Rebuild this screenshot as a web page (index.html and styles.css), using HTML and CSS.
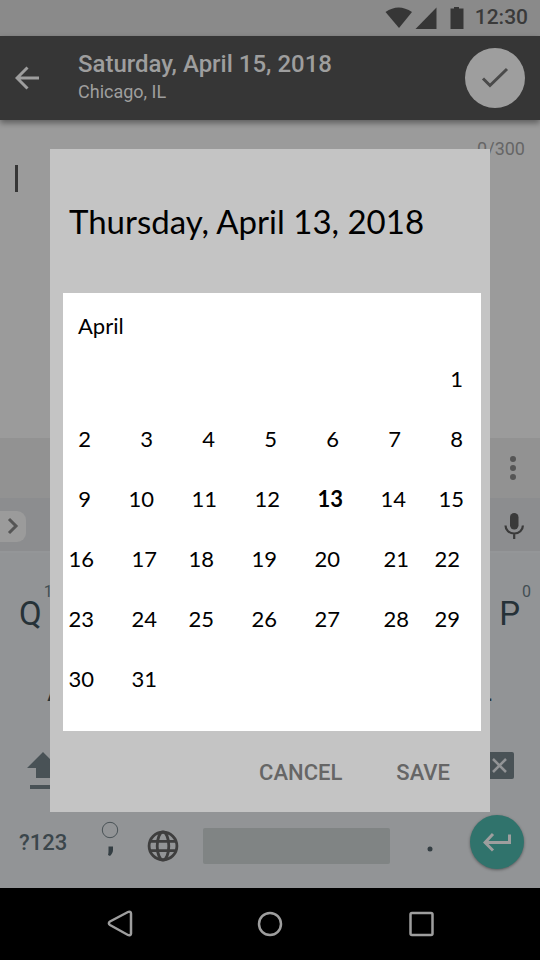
FILE: index.html
```html
<!DOCTYPE html>
<html lang="en">
<head>
<meta charset="utf-8">
<meta name="viewport" content="width=device-width, initial-scale=1">
<title>Date picker</title>
<link rel="stylesheet" href="styles.css">
</head>
<body>
<div class="screen">
  <div class="status">
    <svg class="status-icons" width="80" height="24" viewBox="0 0 80 24" aria-hidden="true">
      <path d="M.5 6Q13.500-3 27 6L14 22z"/>
      <path d="M51.500 1.500V23H30.500z"/>
      <path d="M69 1h5V2.500h4.500V23h-13V2.500H69z"/>
    </svg>
    <span>12:30</span>
  </div>
  <header class="appbar">
    <button class="plain back" aria-label="Back">
      <svg width="24" height="24" viewBox="0 0 24 24"><path d="M24 12H2M12.500 1.500L2 12l10.500 10.500"/></svg>
    </button>
    <div class="titles">
      <h1>Saturday, April 15, 2018</h1>
      <p>Chicago, IL</p>
    </div>
    <button class="plain done" aria-label="Done">
      <svg width="28" height="22" viewBox="0 0 28 22"><path d="M2 11.500l7 7L26 2"/></svg>
    </button>
  </header>
  <main class="editor">
    <div class="count">0/300</div>
    <div class="caret"></div>
  </main>
  <div class="toolbar">
    <button class="plain" aria-label="More options">
      <svg width="8" height="26" viewBox="0 0 8 26" fill="#555"><circle cx="4" cy="4" r="3"/><circle cx="4" cy="13" r="3"/><circle cx="4" cy="22" r="3"/></svg>
    </button>
  </div>
  <div class="suggestions">
    <button class="plain expand" aria-label="Expand">
      <svg width="12" height="18" viewBox="0 0 12 18"><path d="M2 2l7 7-7 7"/></svg>
    </button>
    <button class="plain mic" aria-label="Voice input">
      <svg width="20" height="26" viewBox="0 0 20 26"><rect x="6" y="0" width="8.500" height="16.500" rx="4.200" fill="#3a3a3a"/><path d="M1.500 12.500c0 4.500 3.800 8 8.700 8s8.700-3.500 8.700-8M10.200 20v6" fill="none" stroke="#3a3a3a" stroke-width="2.200"/></svg>
    </button>
  </div>
  <div class="keyboard">
    <div class="keys">
      <button class="plain key">Q<sup>1</sup></button>
      <button class="plain key">P<sup>0</sup></button>
    </div>
    <div class="keys home">
      <button class="plain key">A</button>
      <button class="plain key">L</button>
    </div>
    <div class="keys edit">
      <button class="plain shift" aria-label="Shift">
        <svg width="32" height="40" viewBox="0 0 32 40"><path d="M16 1l16 16h-7v10H9V17H0zM3 34h26v4H3z" fill="#495256"/></svg>
      </button>
      <button class="plain" aria-label="Backspace">
        <svg width="38" height="28" viewBox="0 0 38 28"><path d="M12 0h24a2 2 0 0 1 2 2v23a2 2 0 0 1-2 2H12L1 13.500z" fill="#495256"/><path d="M17 7l13 13M30 7l-13 13" stroke="#929496" stroke-width="2.500"/></svg>
      </button>
    </div>
    <div class="keys bottom">
      <button class="plain sym">?123</button>
      <button class="plain comma" aria-label="Comma">
        <svg width="18" height="38" viewBox="0 0 18 38"><circle cx="9" cy="9" r="7.700" fill="none" stroke="#495256"/><path d="M7.500 25.500h4.500v3.500c0 2-1 4-3 6l-2-1C7.500 32.500 7.500 31 7.500 29z" fill="#343e43"/></svg>
      </button>
      <button class="plain globe" aria-label="Language">
        <svg width="32" height="32" viewBox="0 0 32 32" fill="none" stroke="#3e3e3e" stroke-width="2.800"><circle cx="16" cy="16" r="13.900"/><ellipse cx="16" cy="16" rx="5.800" ry="14"/><path d="M3 11.300h26M3 20.700h26"/></svg>
      </button>
      <button class="plain space" aria-label="Space"></button>
      <button class="plain period" aria-label="Period">
        <svg width="6" height="6" viewBox="0 0 6 6"><circle cx="3" cy="3" r="2.500" fill="#343e43"/></svg>
      </button>
      <button class="plain enter" aria-label="Enter">
        <svg width="28" height="20" viewBox="0 0 28 20"><path d="M26.500 2.500v8H2M10 2L2 10.500 10 18.500"/></svg>
      </button>
    </div>
  </div>
  <nav class="nav">
    <button class="plain" aria-label="Back">
      <svg width="28" height="28" viewBox="0 0 28 28"><path d="M23 2c1.500-.800 3 0 3 1.500v20c0 1.500-1.500 2.300-3 1.500L5 15c-1.500-.900-1.500-2.600 0-3.500z"/></svg>
    </button>
    <button class="plain" aria-label="Home">
      <svg width="28" height="28" viewBox="0 0 28 28"><circle cx="14" cy="14" r="11"/></svg>
    </button>
    <button class="plain" aria-label="Recent apps">
      <svg width="28" height="28" viewBox="0 0 28 28"><rect x="3.500" y="3" width="22" height="22" rx="1.500"/></svg>
    </button>
  </nav>
</div>

<div class="overlay">
  <section class="dialog" role="dialog" aria-labelledby="picked">
    <h2 id="picked">Thursday, April 13, 2018</h2>
    <table class="calendar">
      <caption>April</caption>
      <tbody>
        <tr><td></td><td></td><td></td><td></td><td></td><td></td><td>1</td></tr>
        <tr><td>2</td><td>3</td><td>4</td><td>5</td><td>6</td><td>7</td><td>8</td></tr>
        <tr class="mixed"><td>9</td><td>10</td><td>11</td><td>12</td><td class="selected">13</td><td>14</td><td>15</td></tr>
        <tr class="double"><td>16</td><td>17</td><td>18</td><td>19</td><td>20</td><td>21</td><td>22</td></tr>
        <tr class="double"><td>23</td><td>24</td><td>25</td><td>26</td><td>27</td><td>28</td><td>29</td></tr>
        <tr class="double"><td>30</td><td>31</td><td></td><td></td><td></td><td></td><td></td></tr>
      </tbody>
    </table>
    <div class="actions">
      <button class="plain">CANCEL</button>
      <button class="plain">SAVE</button>
    </div>
  </section>
</div>
</body>
</html>
```
FILE: styles.css
```css
* { box-sizing: border-box; }

body {
  margin: 0;
  font-family: Roboto, sans-serif;
  background: #9b9b9b;
}

h1, h2, p { margin: 0; }
svg { display: block; }

.plain {
  margin: 0;
  padding: 0;
  border: 0;
  background: none;
  color: inherit;
  font: inherit;
  cursor: pointer;
}

.screen {
  display: flex;
  flex-direction: column;
  min-height: 100vh;
}

.status {
  display: flex;
  align-items: center;
  justify-content: flex-end;
  gap: 10px;
  height: 36px;
  padding-right: 12px;
  background: #8a8a8a;
  color: #3a3a3a;
  font-size: 21px;
  font-weight: 500;
  line-height: 34px;
}
.status-icons { fill: #363636; }
.status span { padding-bottom: 2px; }

.appbar {
  display: flex;
  align-items: center;
  height: 84px;
  padding: 0 15px;
  background: #363636;
  color: #9e9e9e;
  box-shadow: 0 3px 6px rgba(0, 0, 0, 0.4);
}
.back svg { fill: none; stroke: #9e9e9e; stroke-width: 3; }
.titles { flex: 1; padding-left: 39px; }
.titles h1 { font-size: 24px; font-weight: 500; line-height: 28px; }
.titles p { font-size: 18px; line-height: 28px; }
.done {
  display: grid;
  place-items: center;
  width: 60px;
  height: 60px;
  border-radius: 50%;
  background: #9e9e9e;
}
.done svg { fill: none; stroke: #4a4a4a; stroke-width: 3; }

.editor { flex: 1; padding: 16px 15px; }
.count {
  color: #666;
  font-size: 18px;
  line-height: 26px;
  text-align: right;
}
.caret { width: 3px; height: 27px; margin-top: 3px; background: #363636; }

.toolbar {
  display: flex;
  align-items: center;
  justify-content: flex-end;
  height: 60px;
  padding-right: 23px;
  background: #929292;
}

.suggestions {
  display: flex;
  align-items: center;
  justify-content: space-between;
  height: 55px;
  padding: 3px 16px 0 0;
  border-bottom: 2px solid #949698;
  background: #8c8d8f;
}
.expand {
  width: 26px;
  height: 31px;
  padding-left: 7px;
  border-radius: 0 9px 9px 0;
  background: #9b9b9b;
}
.expand svg { fill: none; stroke: #555; stroke-width: 3; }

.keyboard { padding: 23px 0 8px; background: #929496; }
.keys {
  display: flex;
  align-items: center;
  justify-content: space-between;
  height: 76px;
  padding: 0 20px 0 19px;
}
.key { position: relative; color: #263238; font-size: 33px; line-height: 40px; }
.key sup {
  position: absolute;
  left: 100%;
  top: -12px;
  color: #434e53;
  font-size: 16px;
  line-height: 20px;
  padding-left: 2px;
}
.home { padding: 0 48px 0 47px; }
.edit { padding: 0 26px 0 27px; }
.shift { padding-top: 9px; }
.bottom { padding: 0 16px 0 19px; }
.sym { color: #3b464b; font-size: 22px; font-weight: 500; }
.comma { margin-left: 34px; padding-bottom: 4px; }
.globe { margin: 8px 24px 0 28px; }
.space { flex: 1; height: 36px; margin-top: 8px; border-radius: 2px; background: #808484; }
.period { margin: 13px 37px 0 37px; }
.enter {
  display: grid;
  place-items: center;
  width: 54px;
  height: 54px;
  border-radius: 50%;
  background: #30736c;
  box-shadow: 0 1px 3px rgba(0, 0, 0, 0.4);
}
.enter svg { fill: none; stroke: #9e9e9e; stroke-width: 3; }

.nav {
  display: flex;
  align-items: center;
  justify-content: space-between;
  height: 72px;
  padding: 0 105px;
  background: #000;
}
.nav svg { fill: none; stroke: #9e9e9e; stroke-width: 2.5; }

.overlay {
  position: absolute;
  inset: 0;
  display: grid;
  place-items: center;
}
.dialog {
  width: calc(100% - 100px);
  padding: 0 9px 0 13px;
  background: #c4c4c4;
  color: #000;
}
.dialog h2 {
  padding: 0 6px;
  font-family: Lato, sans-serif;
  font-size: 33px;
  font-weight: 400;
  line-height: 144px;
}

.calendar {
  display: block;
  padding-bottom: 22px;
  background: #fff;
  font-family: Lato, sans-serif;
  font-size: 22px;
}
.calendar caption {
  display: block;
  padding: 10px 15px 0;
  line-height: 46px;
  text-align: left;
}
.calendar tbody { display: block; }
.calendar tr {
  display: grid;
  grid-template-columns: 28fr repeat(6, 62fr) 18fr;
}
.calendar tr.mixed { grid-template-columns: 28fr repeat(5, 63fr) 58fr 17fr; }
.calendar tr.double { grid-template-columns: 31fr 63fr 57fr 63fr 63fr 69fr 51fr 21fr; }
.calendar td {
  display: flex;
  justify-content: flex-end;
  height: 60px;
  padding: 0;
  line-height: 60px;
}
.calendar .selected { font-weight: 700; }

.actions {
  display: flex;
  justify-content: flex-end;
  gap: 54px;
  padding: 2px 31px 0 0;
  color: #666;
  font-size: 22px;
  font-weight: 500;
  line-height: 79px;
}
```
